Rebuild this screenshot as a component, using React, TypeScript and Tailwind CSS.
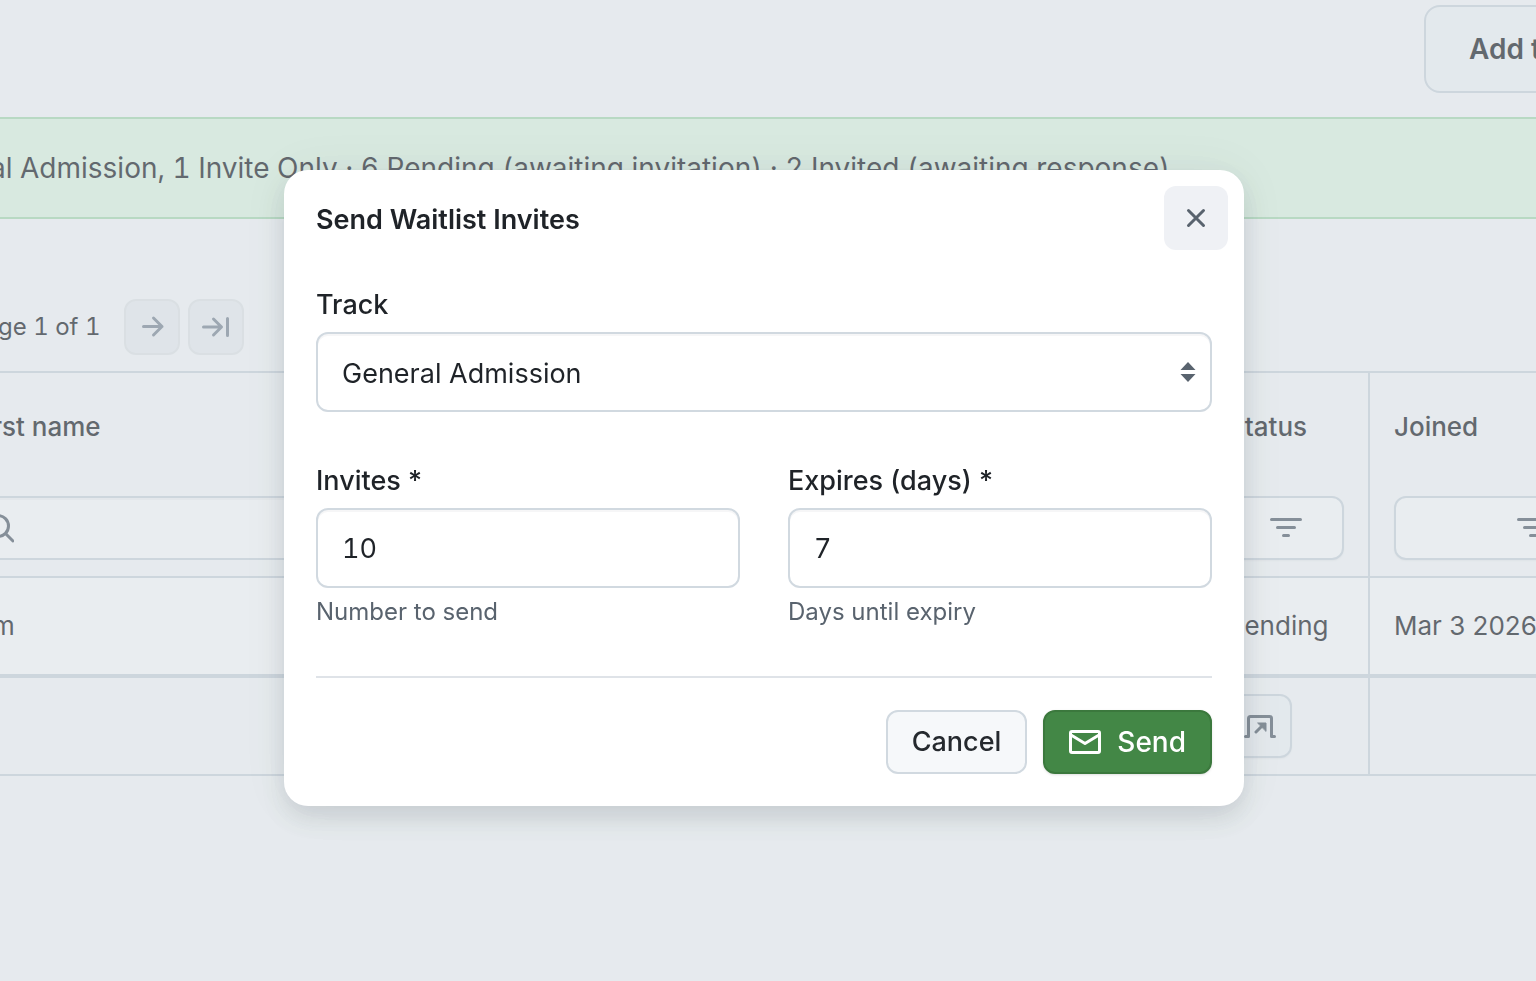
import React, { useState } from 'react';

const CloseIcon = () => (
  <svg className="w-8 h-8" aria-hidden="true" fill="none" stroke="currentColor" strokeWidth="3" strokeLinecap="round" viewBox="0 0 32 32">
    <path d="M8.5 8.5l15 15M23.5 8.5l-15 15" />
  </svg>
);

const MailIcon = () => (
  <svg className="w-8 h-8" aria-hidden="true" fill="none" stroke="currentColor" strokeWidth="3" strokeLinejoin="round" viewBox="0 0 32 32">
    <rect x="1.5" y="5.5" width="29" height="21" rx="1.5" />
    <path d="M2 9l14 8.5L30 9" />
  </svg>
);

const ArrowRightIcon = () => (
  <svg className="w-8 h-8" aria-hidden="true" fill="none" stroke="currentColor" strokeWidth="3" strokeLinecap="round" strokeLinejoin="round" viewBox="0 0 32 32">
    <path d="M7.5 15.5h18.5M17.5 7l8.5 8.5-8.5 8.5" />
  </svg>
);

const ArrowEndIcon = () => (
  <svg className="w-8 h-8" aria-hidden="true" fill="none" stroke="currentColor" strokeWidth="3" strokeLinecap="round" strokeLinejoin="round" viewBox="0 0 32 32">
    <path d="M3.5 16h17.5M13.5 8l8 8-8 8M27.5 7.5v17" />
  </svg>
);

const FilterIcon = () => (
  <svg className="w-8 h-8" aria-hidden="true" fill="none" stroke="currentColor" strokeWidth="3" strokeLinecap="round" viewBox="0 0 32 32">
    <path d="M1.5 7.5h29M7.5 15.5h17M13.5 23.5h5" />
  </svg>
);

const SearchIcon = () => (
  <svg className="w-8 h-8 shrink-0" aria-hidden="true" fill="none" stroke="currentColor" strokeWidth="3" strokeLinecap="round" viewBox="0 0 32 32">
    <circle cx="16" cy="14" r="10.5" />
    <path d="M24 22l7 7" />
  </svg>
);

const OpenIcon = () => (
  <svg className="w-8 h-8" aria-hidden="true" fill="none" stroke="currentColor" strokeWidth="3" strokeLinecap="round" strokeLinejoin="round" viewBox="0 0 32 32">
    <path d="M1.5 26.5h3v-18a2 2 0 0 1 2-2h19a2 2 0 0 1 2 2v18h3M12 22l7-7" />
    <path d="M14 13h8v8z" fill="currentColor" strokeWidth="1" />
  </svg>
);

const SortIcon = () => (
  <svg className="w-4 h-5" aria-hidden="true" fill="currentColor" viewBox="0 0 16 20">
    <path d="M8 0l7.5 8h-15zM8 20l7.5-8h-15z" />
  </svg>
);

const FilterButton: React.FC<{ label: string }> = ({ label }) => (
  <button
    type="button"
    aria-label={label}
    className="flex w-full h-16 items-center justify-center rounded-xl border-2 border-[#d1d9e0] bg-white text-[#59636e] shadow-xs"
  >
    <FilterIcon />
  </button>
);

interface NumberFieldProps {
  id: string;
  label: string;
  hint: string;
  value: string;
  onChange: (value: string) => void;
}

const NumberField: React.FC<NumberFieldProps> = ({ id, label, hint, value, onChange }) => (
  <div className="flex flex-1 min-w-0 flex-col">
    <label htmlFor={id} className="mb-[6px] text-[27px] leading-[42px] font-medium">{label} *</label>
    <input
      id={id}
      type="text"
      inputMode="numeric"
      aria-describedby={`${id}-hint`}
      value={value}
      onChange={(e) => onChange(e.target.value)}
      className="h-20 w-full rounded-xl border-2 border-[#d1d9e0] bg-white px-6 text-[27px] tabular-nums shadow-[inset_0_2px_0_#1f23280a] outline-none"
    />
    <p id={`${id}-hint`} className="mt-2 text-2xl leading-8 text-[#59636e]">{hint}</p>
  </div>
);

const InviteModal: React.FC<{ onClose: () => void }> = ({ onClose }) => {
  const [track, setTrack] = useState('general');
  const [invites, setInvites] = useState('10');
  const [expires, setExpires] = useState('7');

  return (
    <div className="fixed inset-0 flex items-center justify-center bg-[#c8d1da]/40 pr-2 pb-[5px]">
      <div
        role="dialog"
        aria-modal="true"
        aria-labelledby="invite-title"
        className="w-full max-w-[960px] rounded-3xl bg-white shadow-[0_12px_24px_#25292e1f,0_0_48px_#25292e0f]"
      >
        <div className="flex items-center justify-between p-4">
          <h2 id="invite-title" className="pt-1 pl-4 text-[27px] leading-10 font-semibold">Send Waitlist Invites</h2>
          <button
            type="button"
            aria-label="Close"
            onClick={onClose}
            className="flex w-16 h-16 items-center justify-center rounded-xl bg-[#eff1f5] text-[#59636e]"
          >
            <CloseIcon />
          </button>
        </div>

        <form className="px-8 pt-[18px] pb-8" onSubmit={(e) => e.preventDefault()}>
          <div className="flex flex-col">
            <label htmlFor="track" className="mb-[6px] text-[27px] leading-[42px] font-medium">Track</label>
            <div className="relative">
              <select
                id="track"
                value={track}
                onChange={(e) => setTrack(e.target.value)}
                className="h-20 w-full appearance-none rounded-xl border-2 border-[#d1d9e0] bg-white px-6 pt-1 text-[27px] shadow-[inset_0_2px_0_#1f23280a] outline-none"
              >
                <option value="general">General Admission</option>
                <option value="invite">Invite Only</option>
              </select>
              <span className="pointer-events-none absolute inset-y-0 right-4 flex items-center text-[#59636e]">
                <SortIcon />
              </span>
            </div>
          </div>

          <div className="mt-12 flex gap-12">
            <NumberField id="invites" label="Invites" hint="Number to send" value={invites} onChange={setInvites} />
            <NumberField id="expires" label="Expires (days)" hint="Days until expiry" value={expires} onChange={setExpires} />
          </div>

          <div className="mt-12 flex justify-end gap-4 border-t-2 border-[#dfe3e8] pt-8">
            <button
              type="button"
              onClick={onClose}
              className="h-16 rounded-xl border-2 border-[#d1d9e0] bg-[#f6f8fa] px-6 text-[27px] font-medium text-[#25292e]"
            >
              Cancel
            </button>
            <button
              type="submit"
              className="flex h-16 items-center gap-4 rounded-xl border-2 border-[#3b783d] bg-[#438746] px-6 text-[28px] font-medium text-white shadow-sm"
            >
              <MailIcon />
              Send
            </button>
          </div>
        </form>
      </div>
    </div>
  );
};

export default function App() {
  const [isOpen, setIsOpen] = useState(true);

  return (
    <div className="min-h-screen overflow-hidden bg-[#fafbfc] font-[Inter,sans-serif] text-[#1f2328]">
      <header className="flex justify-end pt-[5px] pb-6">
        <button
          type="button"
          onClick={() => setIsOpen(true)}
          className="-mr-[109px] h-[88px] shrink-0 rounded-2xl border-2 border-[#d1d9e0] bg-[#f6f8fa] px-[43px] text-[28px] font-semibold whitespace-nowrap"
        >
          Add track
        </button>
      </header>

      <p className="-ml-[10px] border-y-2 border-[#addeb5] bg-[#e3f9e5] py-7 text-[28px] leading-[42px] whitespace-nowrap tabular-nums">
        al Admission, 1 Invite Only · 6 Pending (awaiting invitation) · 2 Invited (awaiting response)
      </p>

      <nav aria-label="Pagination" className="-ml-[2px] flex items-center gap-2 pt-20 pb-4 text-2xl tabular-nums">
        <span className="mr-4">ge 1 of 1</span>
        <button type="button" disabled aria-label="Next page" className="flex w-14 h-14 items-center justify-center rounded-xl border-2 border-[#e6e8ea] bg-[#eff1f4] text-[#818b98]">
          <ArrowRightIcon />
        </button>
        <button type="button" disabled aria-label="Last page" className="flex w-14 h-14 items-center justify-center rounded-xl border-2 border-[#e6e8ea] bg-[#eff1f4] text-[#818b98]">
          <ArrowEndIcon />
        </button>
      </nav>

      <table className="w-[1696px] table-fixed border-separate border-spacing-0 text-left text-[26px] leading-9">
        <colgroup>
          <col />
          <col className="w-[166px]" />
          <col className="w-[326px]" />
        </colgroup>
        <thead>
          <tr>
            <th className="border-y-2 border-[#d1d9e0] pt-9 pb-4 font-medium">
              <div className="mb-[51px] -ml-2">rst name</div>
              <label className="-ml-5 flex h-16 items-center rounded-xl border-2 border-[#d1d9e0] bg-white text-[#59636e] shadow-[inset_0_2px_0_#1f23280a]">
                <SearchIcon />
                <input type="text" aria-label="Filter by first name" className="w-full px-4 outline-none" />
              </label>
            </th>
            <th className="border-y-2 border-r-2 border-[#d1d9e0] px-6 pt-9 pb-4 font-medium">
              <div className="mb-[51px]">Status</div>
              <FilterButton label="Filter by status" />
            </th>
            <th className="border-y-2 border-[#d1d9e0] px-6 pt-9 pb-4 font-medium">
              <div className="mb-[51px]">Joined</div>
              <FilterButton label="Filter by date joined" />
            </th>
          </tr>
        </thead>
        <tbody>
          <tr className="bg-white">
            <td className="h-[100px] border-b-4 border-[#d1d9e0]"><div className="-ml-2">m</div></td>
            <td className="border-r-2 border-b-4 border-[#d1d9e0] px-6">Pending</td>
            <td className="border-b-4 border-[#d1d9e0] px-6 whitespace-nowrap">Mar 3 2026</td>
          </tr>
          <tr>
            <td className="border-b-2 border-[#d1d9e0]" />
            <td className="border-r-2 border-b-2 border-[#d1d9e0] px-6 py-4">
              <button type="button" aria-label="Open" className="flex w-16 h-16 items-center justify-center rounded-xl border-2 border-[#d1d9e0] bg-[#f6f8fa] text-[#59636e] shadow-xs">
                <OpenIcon />
              </button>
            </td>
            <td className="border-b-2 border-[#d1d9e0]" />
          </tr>
        </tbody>
      </table>

      {isOpen && <InviteModal onClose={() => setIsOpen(false)} />}
    </div>
  );
}
